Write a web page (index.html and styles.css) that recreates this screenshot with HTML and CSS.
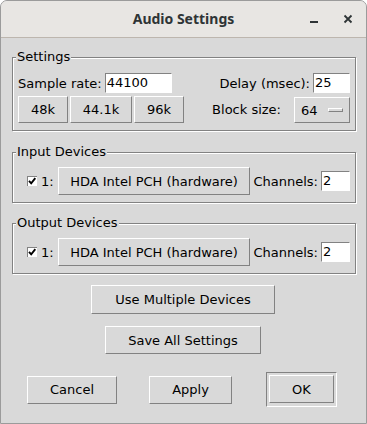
FILE: index.html
```html
<!DOCTYPE html>
<html>
<head>
<meta charset="utf-8">
<link rel="stylesheet" href="styles.css">
</head>
<body>
<div class="window">
  <div class="titlebar">
    <span></span>
    <span class="title">Audio Settings</span>
    <span class="wm">
      <svg class="wm-icon" width="10" height="10" viewBox="0 0 10 10"><rect x="1" y="7" width="8" height="2" fill="#2e3436"/></svg>
      <svg class="wm-icon" width="10" height="10" viewBox="0 0 10 10"><path d="M1.5 1.5L8.5 8.5M8.5 1.5L1.5 8.5" stroke="#2e3436" stroke-width="1.8" fill="none"/></svg>
    </span>
  </div>
  <div class="content">
    <div class="group settings">
      <span class="group-title">Settings</span>
      <div class="col col-left">
        <div class="row r1">
          <span class="lbl">Sample rate:</span>
          <span class="entry w-rate">44100</span>
        </div>
        <div class="row r2 rates">
          <span class="btn w-48">48k</span>
          <span class="btn w-44">44.1k</span>
          <span class="btn w-96">96k</span>
        </div>
      </div>
      <div class="col col-right">
        <div class="row r1">
          <span class="lbl">Delay (msec):</span>
          <span class="entry w-delay">25</span>
        </div>
        <div class="row r2">
          <span class="lbl bs">Block size:</span>
          <span class="menubtn">64<span class="ind"></span></span>
        </div>
      </div>
    </div>

    <div class="group devices in">
      <span class="group-title">Input Devices</span>
      <div class="dev-row">
        <svg class="check" width="10" height="10" viewBox="0 0 10 10"><rect width="10" height="10" fill="#fff"/><path d="M0 0.5H10M0.5 0V10" stroke="#828282" fill="none"/><path d="M2 4.8L4.2 7.3L8.3 2.2" stroke="#000" stroke-width="1.9" fill="none"/></svg>
        <span class="lbl">1:</span>
        <span class="btn dev">HDA Intel PCH (hardware)</span>
        <span class="lbl">Channels:</span>
        <span class="entry w-ch">2</span>
      </div>
    </div>

    <div class="group devices out">
      <span class="group-title">Output Devices</span>
      <div class="dev-row">
        <svg class="check" width="10" height="10" viewBox="0 0 10 10"><rect width="10" height="10" fill="#fff"/><path d="M0 0.5H10M0.5 0V10" stroke="#828282" fill="none"/><path d="M2 4.8L4.2 7.3L8.3 2.2" stroke="#000" stroke-width="1.9" fill="none"/></svg>
        <span class="lbl">1:</span>
        <span class="btn dev">HDA Intel PCH (hardware)</span>
        <span class="lbl">Channels:</span>
        <span class="entry w-ch">2</span>
      </div>
    </div>

    <div class="actions">
      <span class="btn multi">Use Multiple Devices</span>
      <span class="btn save">Save All Settings</span>
    </div>

    <div class="bottom">
      <span class="btn cancel">Cancel</span>
      <span class="btn apply">Apply</span>
      <span class="default-ring"><span class="btn ok">OK</span></span>
    </div>
  </div>
</div>
</body>
</html>
```

FILE: styles.css
```css
* { box-sizing: border-box; }
html, body { margin: 0; padding: 0; background: #ffffff; }
body {
  width: 367px;
  height: 424px;
  font-family: "DejaVu Sans", sans-serif;
  font-size: 13px;
  color: #000;
  overflow: hidden;
}
.window {
  width: 367px;
  height: 424px;
  border: 1px solid #9b9b9b;
  border-radius: 7px 7px 0 0;
  background: #d9d9d9;
  display: flex;
  flex-direction: column;
  overflow: hidden;
}
.titlebar {
  height: 37px;
  flex: none;
  background: #e8e6e3;
  border-bottom: 1px solid #bdb6ae;
  display: grid;
  grid-template-columns: 1fr auto 1fr;
  align-items: center;
}
.title {
  font-family: "Noto Sans", sans-serif;
  font-weight: bold;
  font-size: 14px;
  color: #2e3436;
  line-height: 18px;
}
.wm {
  justify-self: end;
  display: flex;
  gap: 24px;
  padding-right: 13px;
}
.wm-icon { display: block; }

.content {
  flex: 1;
  padding: 19px 10px 0 11px;
  display: flex;
  flex-direction: column;
}
.group {
  position: relative;
  border: 1px solid #828282;
  box-shadow: inset 1px 1px 0 #ffffff, 1px 1px 0 #ffffff;
}
.group-title {
  position: absolute;
  top: -9px;
  left: 3px;
  padding: 0 1px;
  background: #d9d9d9;
  line-height: 15px;
  white-space: nowrap;
}
.lbl { white-space: nowrap; line-height: 15px; }

.settings {
  padding: 15px 5px 7px 5px;
  display: flex;
  justify-content: space-between;
}
.col { display: flex; flex-direction: column; gap: 3px; }
.col-right { align-items: flex-end; }
.row { display: flex; align-items: center; }
.r1 { height: 20px; gap: 3px; }
.r2 { height: 27px; }
.rates { gap: 2px; }
.col-right .r2 { align-items: flex-end; }
.bs { margin-right: 13px; align-self: center; }

.entry {
  display: block;
  background: #ffffff;
  border: 1px solid;
  border-color: #828282 #ffffff #ffffff #828282;
  height: 20px;
  line-height: 18px;
  padding: 0 1px;
}
.w-rate { width: 67px; }
.w-delay { width: 37px; }
.w-ch { width: 29px; height: 20px; }

.btn {
  display: flex;
  align-items: center;
  justify-content: center;
  background: #d9d9d9;
  border: 1px solid;
  border-color: #ffffff #828282 #828282 #ffffff;
  white-space: nowrap;
  line-height: 15px;
}
.w-48 { width: 50px; height: 27px; }
.w-44 { width: 62px; height: 27px; }
.w-96 { width: 50px; height: 27px; }

.menubtn {
  display: flex;
  align-items: center;
  width: 56px;
  height: 26px;
  padding-left: 6px;
  border: 1px solid;
  border-color: #ffffff #828282 #828282 #ffffff;
  line-height: 15px;
}
.ind {
  display: block;
  width: 15px;
  height: 4px;
  margin-left: 10px;
  border: 1px solid;
  border-color: #ffffff #828282 #828282 #ffffff;
  background: #d9d9d9;
}

.devices { padding: 14px 5px 7px 5px; }
.devices.in { margin-top: 21px; }
.devices.out { margin-top: 20px; }
.dev-row {
  display: flex;
  align-items: center;
  height: 28px;
}
.check { display: block; margin-left: 9px; margin-right: 4px; flex: none; }
.dev { flex: 1; height: 28px; margin: 0 3px 0 4px; }
.dev-row .entry { margin-left: 3px; }

.actions {
  display: flex;
  flex-direction: column;
  align-items: center;
  padding-right: 2px;
  margin-top: 11px;
  gap: 12px;
}
.multi { width: 184px; height: 29px; }
.save { width: 156px; height: 28px; }

.bottom {
  display: flex;
  align-items: center;
  margin-top: 18px;
  margin-left: 15px;
  height: 35px;
}
.cancel { width: 90px; height: 28px; }
.apply { width: 83px; height: 28px; margin-left: 32px; }
.default-ring {
  display: block;
  margin-left: 34px;
  width: 71px;
  height: 35px;
  padding: 2px;
  border: 1px solid;
  border-color: #828282 #ffffff #ffffff #828282;
}
.ok { width: 65px; height: 28px; }
```
